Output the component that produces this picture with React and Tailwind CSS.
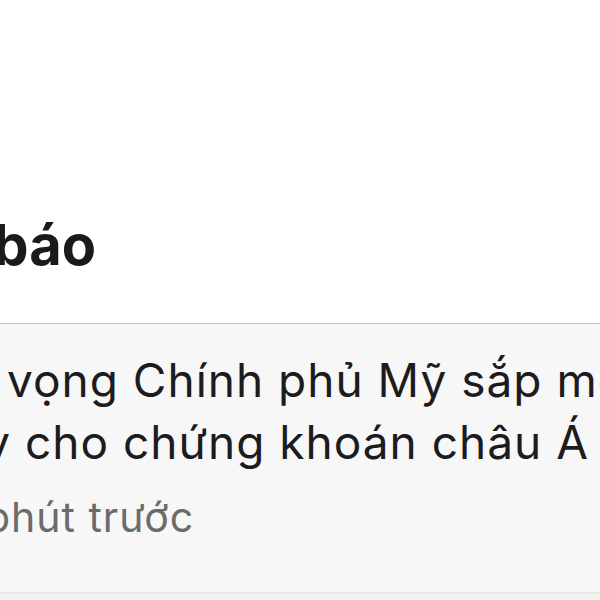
export default function App() {
  return (
    <div className="w-[600px] h-[600px] overflow-hidden bg-white flex flex-col font-['Inter',sans-serif]">
      <div className="h-[323px] shrink-0 bg-white pt-[217px]">
        <div className="flex w-[96px] justify-end">
          <span className="shrink-0 whitespace-nowrap text-[56px] leading-[56px] font-bold text-[#1a1a1a]">Thông báo</span>
        </div>
      </div>
      <div className="h-px shrink-0 bg-[#c4c4c4]" />
      <div className="h-[268px] shrink-0 bg-[#f7f7f7] pt-[25px] overflow-hidden">
        <div className="text-[46px] leading-[62px] tracking-[1px] text-[#1c1c1e]">
          <div className="flex">
            <div className="flex w-[7px] shrink-0 justify-end">
              <span className="shrink-0 whitespace-pre">Kỳ </span>
            </div>
            <span className="shrink-0 whitespace-nowrap">vọng Chính phủ Mỹ sắp mở cửa</span>
          </div>
          <div className="flex">
            <div className="flex w-[25px] shrink-0 justify-end">
              <span className="shrink-0 whitespace-pre">thúc đẩy </span>
            </div>
            <span className="shrink-0 whitespace-nowrap">cho chứng khoán châu Á</span>
          </div>
        </div>
        <div className="mt-[21px] flex text-[41px] leading-[46px] tracking-[1px] text-[#6b6b6b]">
          <div className="flex w-[11px] shrink-0 justify-end">
            <span className="shrink-0 whitespace-pre">5 p</span>
          </div>
          <span className="shrink-0 whitespace-nowrap">hút trước</span>
        </div>
      </div>
      <div className="h-[2px] shrink-0 bg-[#e8e8e8]" />
      <div className="flex-1 bg-[#f3f3f3]" />
    </div>
  );
}
